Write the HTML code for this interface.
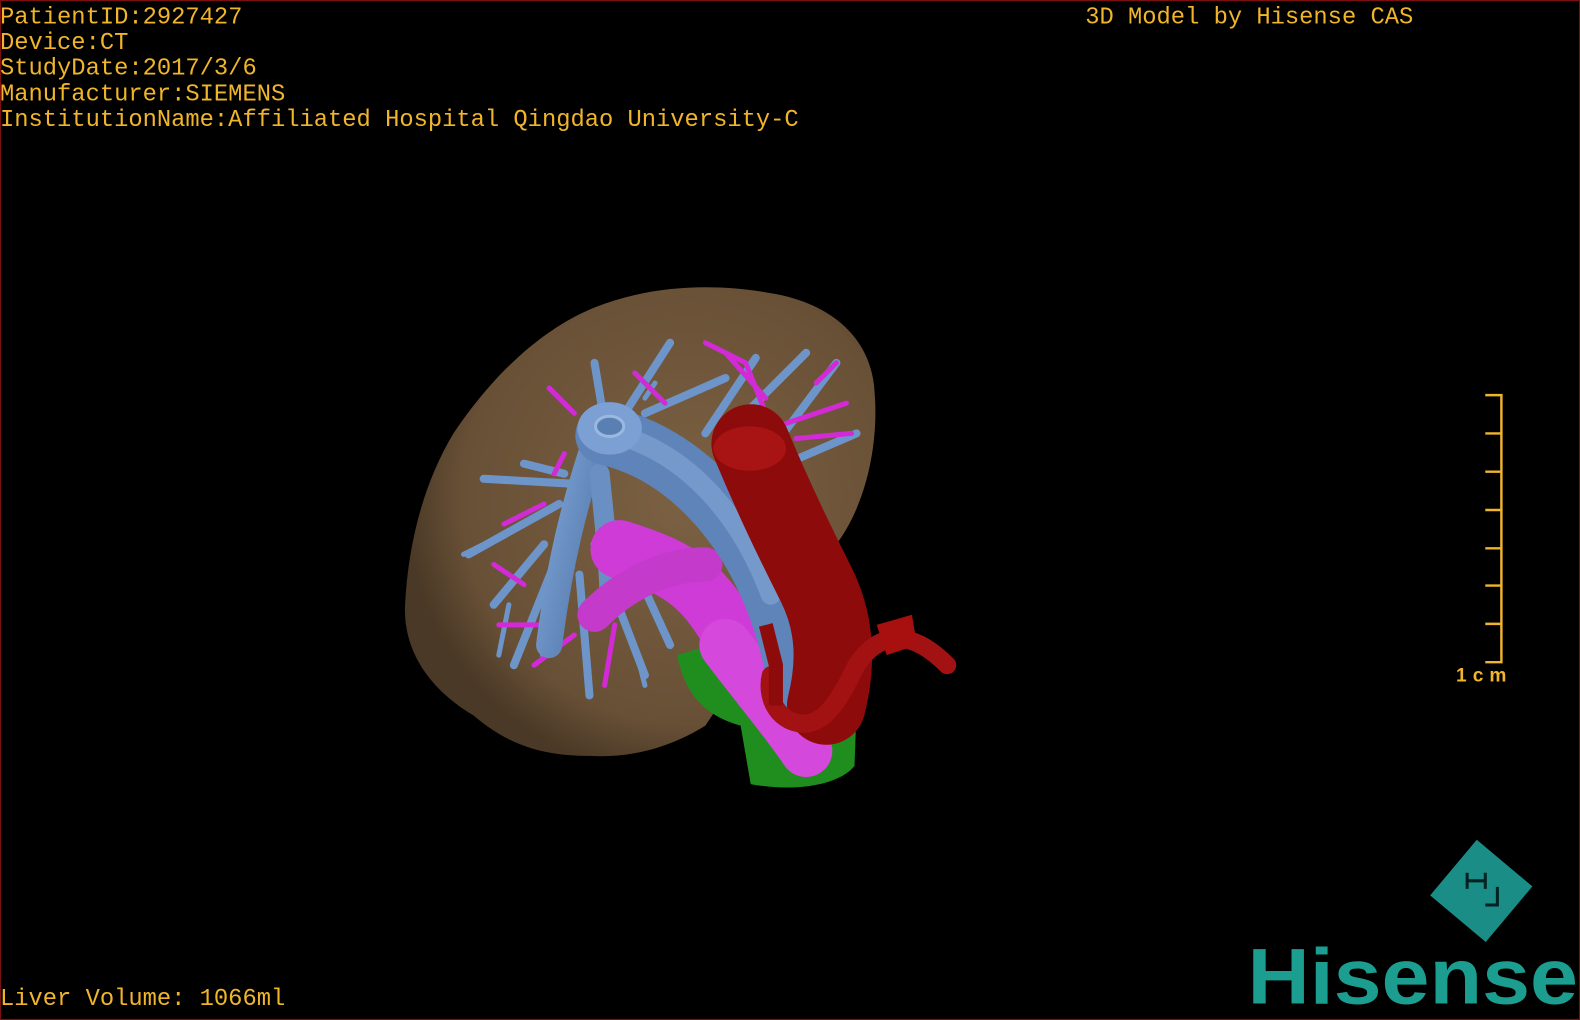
<!DOCTYPE html>
<html><head><meta charset="utf-8"><style>
html,body{margin:0;padding:0;background:#000;}
body{width:1580px;height:1020px;overflow:hidden;}
svg{display:block;}
.t{font-family:"Liberation Mono",monospace;font-size:23.6px;fill:#f0b52a;}
</style></head><body>
<svg width="1580" height="1020" viewBox="0 0 1568 1012" xmlns="http://www.w3.org/2000/svg">
<defs>
<radialGradient id="lv" cx="0.6" cy="0.45" r="0.6">
<stop offset="0" stop-color="#7c6143"/><stop offset="0.8" stop-color="#685036"/><stop offset="1" stop-color="#4a3926"/>
</radialGradient>
<linearGradient id="bl" x1="0" y1="0" x2="1" y2="1"><stop offset="0" stop-color="#7ea4d6"/><stop offset="1" stop-color="#4f74a8"/></linearGradient>
</defs>
<rect x="0" y="0" width="1568" height="1012" fill="#000" stroke="#7a1010" stroke-width="2"/>
<path d="M590,305 C640,285 700,280 760,290 C830,300 866,340 868,390 C872,440 860,500 830,540 L780,600 L700,720 C660,745 620,752 585,750 C540,750 505,740 470,710 C420,680 400,640 402,600 C405,540 420,480 450,430 C490,370 540,325 590,305 Z" fill="url(#lv)"/>
<g stroke="#6e95c9" stroke-linecap="round" fill="none">
<path d="M570,480 L480,475 M560,470 L520,460 M555,500 L465,550 M540,540 L490,600 M550,560 L510,660 M560,560 L540,650 M575,570 L585,690 M590,540 L640,670 M610,520 L665,640 M600,420 L590,360 M620,410 L665,340 M640,410 L720,375 M700,430 L750,355 M730,420 L800,350 M770,440 L830,360 M780,460 L850,430" stroke-width="8"/>
<path d="M520,520 L460,550 M505,600 L495,650 M630,640 L640,680 M650,380 L640,395" stroke-width="5"/>
</g>
<g stroke="#d22ad6" stroke-linecap="round" fill="none" stroke-width="5">
<path d="M545,385 L570,410 M500,520 L540,500 M490,560 L520,580 M495,620 L540,620 M530,660 L570,630 M600,680 L610,620 M630,370 L660,400 M700,340 L740,360 L760,410 M720,350 L760,395 M780,420 L840,400 M790,435 L845,430 M810,380 L830,360 M560,450 L550,470"/>
</g>
<path d="M590,440 C570,500 555,560 545,640" stroke="url(#bl)" stroke-width="26" fill="none" stroke-linecap="round"/>
<path d="M595,470 C600,520 605,560 605,600" stroke="#6a8fc2" stroke-width="20" fill="none" stroke-linecap="round"/>
<path d="M615,545 C660,560 690,570 720,620 C750,670 780,710 805,745" stroke="#cf3bd6" stroke-width="58" fill="none" stroke-linecap="round"/>
<path d="M590,610 C620,580 660,560 700,560" stroke="#c43bcb" stroke-width="34" fill="none" stroke-linecap="round"/>
<path d="M672,650 L705,640 C740,660 800,690 850,705 L848,760 C830,782 780,785 745,778 L735,720 C700,710 680,690 672,650 Z" fill="#1f8e1f"/>
<path d="M720,640 C750,680 780,715 800,745" stroke="#d448db" stroke-width="52" fill="none" stroke-linecap="round"/>
<path d="M600,432 C680,450 740,520 770,600 C785,640 790,670 792,690" stroke="#5f84ba" stroke-width="58" fill="none" stroke-linecap="round"/>
<path d="M600,428 C680,445 735,510 765,590" stroke="#84a7d6" stroke-width="20" fill="none" stroke-linecap="round" opacity="0.6"/>
<ellipse cx="605" cy="425" rx="32" ry="26" fill="#7ca0d3"/>
<ellipse cx="605" cy="423" rx="14" ry="10" fill="#5a7fb3" stroke="#9ab8e0" stroke-width="3"/>
<path d="M745,440 C770,500 790,540 810,580 C830,620 830,660 820,700" stroke="#8e0b0b" stroke-width="78" fill="none" stroke-linecap="round"/>
<path d="M765,670 C760,690 770,715 795,718 C820,720 835,690 850,660 C870,630 900,620 940,660" stroke="#a31212" stroke-width="18" fill="none" stroke-linecap="round"/>
<path d="M870,620 L905,610 L910,640 L880,650 Z" fill="#a81010"/>
<path d="M760,620 L770,660 L770,700" stroke="#8e0b0b" stroke-width="14" fill="none"/>
<ellipse cx="744" cy="445" rx="36" ry="22" fill="#a81414"/>
<text class="t" x="0" y="23">PatientID:2927427</text>
<text class="t" x="0" y="48.5">Device:CT</text>
<text class="t" x="0" y="74">StudyDate:2017/3/6</text>
<text class="t" x="0" y="99.5">Manufacturer:SIEMENS</text>
<text class="t" x="0" y="125">InstitutionName:Affiliated Hospital Qingdao University-C</text>
<text class="t" x="1077" y="23">3D Model by Hisense CAS</text>
<text class="t" x="0" y="997">Liver Volume: 1066ml</text>
<g stroke="#f0b52a" stroke-width="2.4" fill="none">
<path d="M1474,392 H1490 V657 H1474"/>
<path d="M1474,430 H1490 M1474,468 H1490 M1474,506 H1490 M1474,544 H1490 M1474,581 H1490 M1474,619 H1490"/>
</g>
<text x="1445" y="676" font-family="Liberation Sans,sans-serif" font-size="19" font-weight="bold" fill="#f0b52a" textLength="50">1cm</text>
<g transform="translate(1470,884) rotate(40)">
<rect x="-36" y="-36" width="72" height="72" fill="#1a8e86"/>
<path d="M-14,-18 V-2 M-14,-10 H4 M4,-18 V-2 M4,14 H16 V-4" stroke="#022" stroke-width="3" fill="none" transform="rotate(-40)"/>
</g>
<text x="1238" y="996" font-family="Liberation Sans,sans-serif" font-size="78" font-weight="bold" fill="#1b9d8f" textLength="328" lengthAdjust="spacingAndGlyphs">Hisense</text>
</svg>
</body></html>
